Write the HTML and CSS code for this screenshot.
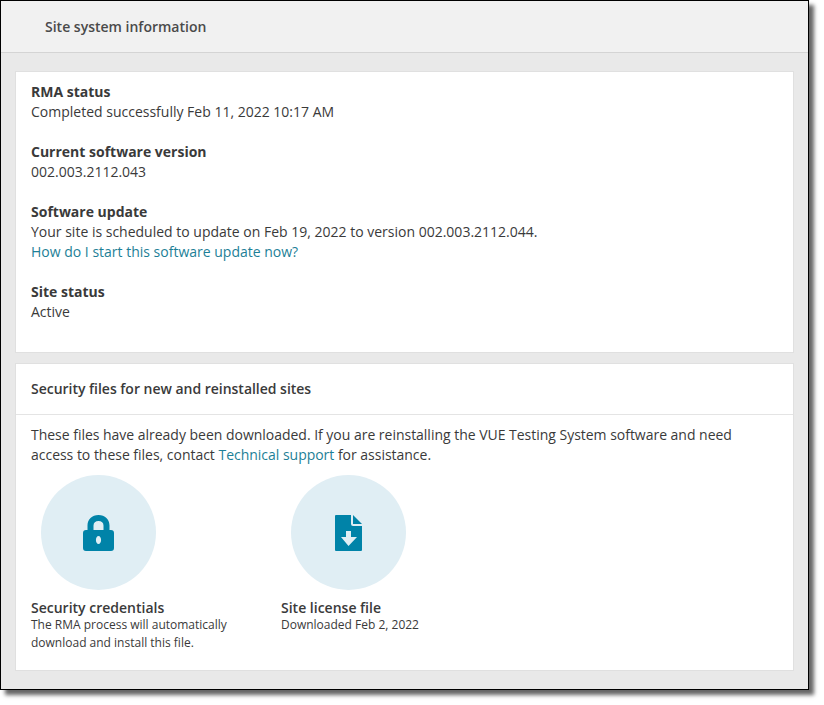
FILE: index.html
```html
<!DOCTYPE html>
<html lang="en">
<head>
<meta charset="utf-8">
<title>Site system information</title>
<link rel="stylesheet" href="styles.css">
</head>
<body>
<main class="window">
  <header class="topbar"><h1 class="topbar-title">Site system information</h1></header>
  <div class="content">
    <section class="card card-info">
      <div class="group">
        <h2 class="label">RMA status</h2>
        <p class="line">Completed successfully Feb 11, 2022 10:17 AM</p>
      </div>
      <div class="group">
        <h2 class="label">Current software version</h2>
        <p class="line">002.003.2112.043</p>
      </div>
      <div class="group">
        <h2 class="label">Software update</h2>
        <p class="line">Your site is scheduled to update on Feb 19, 2022 to version 002.003.2112.044.</p>
        <p class="line"><a class="link" href="#">How do I start this software update now?</a></p>
      </div>
      <div class="group">
        <h2 class="label">Site status</h2>
        <p class="line">Active</p>
      </div>
    </section>
    <section class="card">
      <h2 class="card-title">Security files for new and reinstalled sites</h2>
      <div class="card-body">
        <p class="intro">These files have already been downloaded. If you are reinstalling the VUE Testing System software and need access to these files, contact <a class="link" href="#">Technical support</a> for assistance.</p>
        <div class="files">
          <div class="file">
            <div class="circle">
              <svg class="icon" width="31" height="36" viewBox="0 0 31 36" aria-hidden="true">
                <path fill="#0083a8" fill-rule="evenodd" d="M3 15h1.500v-4.500C4.500 4.500 9 0 15.500 0S26.500 4.500 26.500 10.500V15H28a3 3 0 0 1 3 3v15a3 3 0 0 1-3 3H3a3 3 0 0 1-3-3V18a3 3 0 0 1 3-3zM10.500 15h10v-4.500c0-3-2-4.500-5-4.500s-5 1.500-5 4.500zM15.500 21c-1.500 0-2.600 1.700-2.600 4s1.100 4 2.600 4 2.600-1.700 2.600-4-1.100-4-2.600-4z"/>
              </svg>
            </div>
            <h3 class="file-name">Security credentials</h3>
            <p class="file-note">The RMA process will automatically download and install this file.</p>
          </div>
          <div class="file">
            <div class="circle">
              <svg class="icon" width="27" height="36" viewBox="0 0 27 36" aria-hidden="true">
                <path fill="#0083a8" d="M1 0h15v9a2 2 0 0 0 2 2h9v24a1 1 0 0 1-1 1H1a1 1 0 0 1-1-1V1a1 1 0 0 1 1-1z"/>
                <path fill="#0083a8" d="M18 0 27 9H18z"/>
                <path fill="#e0eef4" d="M11 16h5v6h6l-8.500 9L6 22h5z"/>
              </svg>
            </div>
            <h3 class="file-name">Site license file</h3>
            <p class="file-note">Downloaded Feb 2, 2022</p>
          </div>
        </div>
      </div>
    </section>
  </div>
</main>
</body>
</html>
```

FILE: styles.css
```css
* { box-sizing: border-box; }
html, body { margin: 0; padding: 0; background: #fff; }
body {
  min-height: 705px;
  font-family: "Open Sans", "Liberation Sans", sans-serif;
  font-size: 14px;
  line-height: 20px;
  color: #3a3a3a;
}
h1, h2, h3, p { margin: 0; font-size: inherit; }
.window {
  width: 809px;
  height: 690px;
  border: 1px solid #000;
  background: #e9e9e9;
  box-shadow: 5px 5px 4px rgba(0, 0, 0, 0.6);
}
.topbar {
  height: 52px;
  padding: 16px 44px 0;
  background: #f1f1f1;
  border-bottom: 1px solid #d4d4d4;
}
.topbar-title { font-weight: 600; color: #4a4a4a; }
.content {
  display: flex;
  flex-direction: column;
  gap: 10px;
  padding: 18px 14px 0;
}
.card {
  background: #fff;
  border: 1px solid #e0e0e0;
}
.card-info {
  display: flex;
  flex-direction: column;
  gap: 20px;
  height: 282px;
  padding: 10px 15px;
}
.label { font-weight: 700; }
.link { color: #1d7f97; text-decoration: none; }
.card-title {
  height: 51px;
  padding: 15px 15px 0;
  font-weight: 600;
  letter-spacing: -0.02px;
  border-bottom: 1px solid #e4e4e4;
}
.card-body { padding: 10px 15px 18px; }
.intro { max-width: 710px; letter-spacing: -0.02px; }
.files { display: flex; margin-top: 10px; }
.file { width: 250px; }
.circle {
  display: flex;
  align-items: center;
  justify-content: center;
  width: 115px;
  height: 115px;
  margin: 0 0 8px 10px;
  border-radius: 50%;
  background: #e0eef4;
}
.file-name { font-weight: 600; line-height: 20px; }
.file-note {
  width: 220px;
  font-size: 12px;
  line-height: 18px;
  margin-top: -2px;
}
```
